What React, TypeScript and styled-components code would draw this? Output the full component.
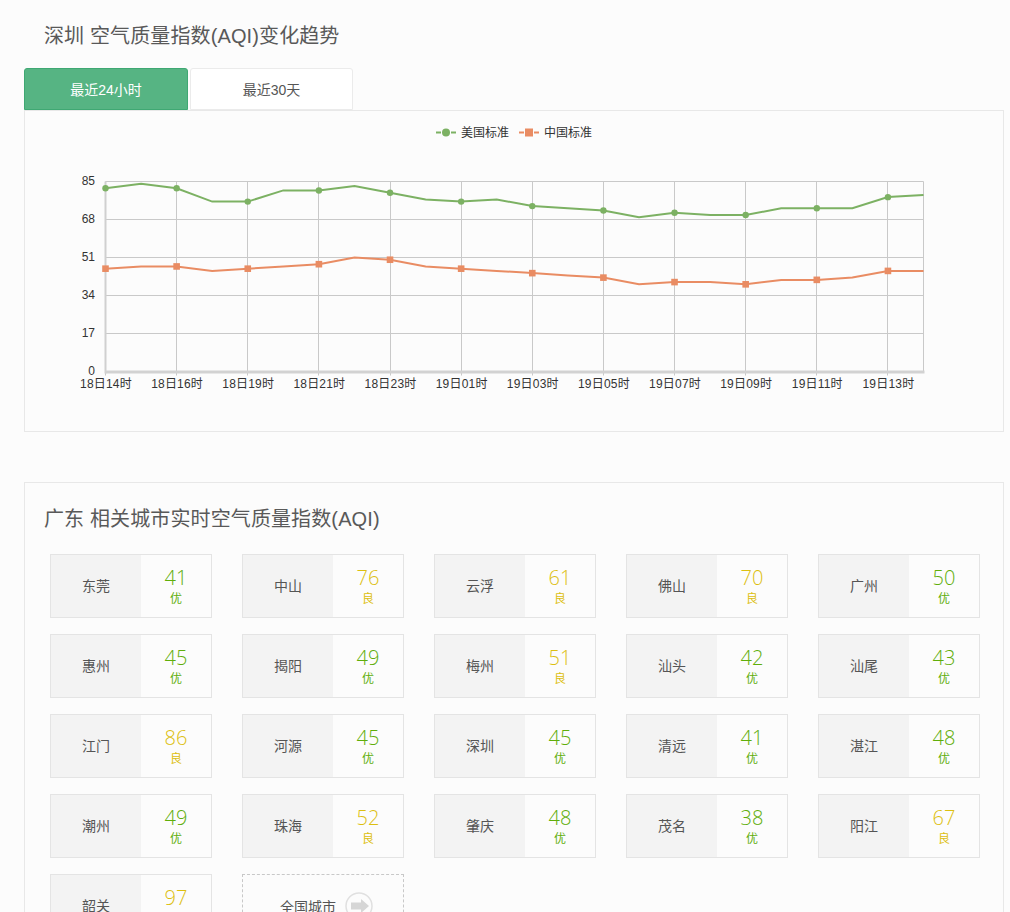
import React from "react";
import styled, { createGlobalStyle } from "styled-components";

const Global = createGlobalStyle`
  html, body { margin: 0; padding: 0; background: #fcfcfc; overflow: hidden; }
  body { font-family: "Liberation Sans", "Noto Sans CJK SC", sans-serif; color: #555; }
`;

const Page = styled.div`
  width: 1010px;
  box-sizing: border-box;
  padding: 0 6px 40px 24px;
`;
const Heading = styled.h2<{ $inset: number }>`
  margin: 0 0 0 ${(p) => p.$inset}px;
  padding-top: 23px;
  font-size: 20px;
  line-height: 26px;
  font-weight: 400;
  letter-spacing: 0.12px;
  color: #595959;
`;
const Tabs = styled.div`
  display: flex;
  gap: 2px;
  margin-top: 19px;
  height: 42px;
`;
const Tab = styled.div<{ $active?: boolean }>`
  width: ${(p) => (p.$active ? 164 : 163)}px;
  box-sizing: border-box;
  display: flex;
  align-items: center;
  justify-content: center;
  font-size: 14px;
  border-radius: 3px 3px 0 0;
  border: 1px solid ${(p) => (p.$active ? "#3fa873" : "#ebebeb")};
  background: ${(p) => (p.$active ? "#56b483" : "#fff")};
  color: ${(p) => (p.$active ? "#fff" : "#555")};
`;
const ChartPanel = styled.div`
  height: 322px;
  box-sizing: border-box;
  border: 1px solid #e8e8e8;
  background: #fcfcfc;
`;
const ChartSvg = styled.svg`
  display: block;
  font-family: "Liberation Sans", "Noto Sans CJK SC", sans-serif;
`;
const CityPanel = styled.div`
  margin-top: 50px;
  border: 1px solid #e8e8e8;
  padding: 0 0 40px 25px;
`;
const CityGrid = styled.div`
  display: grid;
  grid-template-columns: repeat(5, 162px);
  column-gap: 30px;
  row-gap: 16px;
  margin-top: 22px;
`;
const Cell = styled.div<{ $dashed?: boolean }>`
  height: 64px;
  box-sizing: border-box;
  display: flex;
  border: 1px ${(p) => (p.$dashed ? "dashed #c8c8c8" : "solid #e4e4e4")};
`;
const CityName = styled.div`
  width: 90px;
  flex: none;
  box-sizing: border-box;
  padding-bottom: 2px;
  background: #f3f3f3;
  display: flex;
  align-items: center;
  justify-content: center;
  font-size: 14px;
  color: #555;
`;
const Score = styled.div<{ $good: boolean }>`
  flex: 1;
  display: flex;
  flex-direction: column;
  align-items: center;
  padding-top: 11px;
  color: ${(p) => (p.$good ? "#5fae0a" : "#dcbf10")};
`;
const Value = styled.div`
  font-family: "Open Sans", "Liberation Sans", sans-serif;
  font-weight: 300;
  font-size: 20px;
  line-height: 24px;
`;
const Level = styled.div`
  margin-top: 1px;
  font-size: 12px;
  line-height: 16px;
`;
const AllCities = styled.div`
  flex: 1;
  display: flex;
  align-items: center;
  justify-content: center;
  gap: 9px;
  padding-left: 7px;
  font-size: 14px;
  color: #555;
`;

const us = [82,84,82,76,76,81,81,83,80,77,76,77,74,73,72,69,71,70,70,73,73,73,78,79];
const cn = [46,47,47,45,46,47,48,51,50,47,46,45,44,43,42,39,40,40,39,41,41,42,45,45];
const xLabels = ["18日14时","18日16时","18日19时","18日21时","18日23时","19日01时","19日03时","19日05时","19日07时","19日09时","19日11时","19日13时"];
const X0 = 80.5;
const STEP = 35.565;
const Y0 = 260.5;
const px = (i: number) => X0 + i * STEP;
const py = (v: number) => Y0 - (v * 190) / 85;
const snap = (x: number) => Math.floor(x) + 0.5;
const pts = (d: number[]) => d.map((v, i) => `${px(i).toFixed(1)},${py(v).toFixed(1)}`).join(" ");

const GREEN = "#7cb163";
const ORANGE = "#e98c63";
const GRID = "#c9c9c9";

function Chart() {
  return (
    <ChartSvg width="978" height="320" viewBox="0 0 978 320">
      <g fontSize="12" fill="#333">
        <line x1="411" x2="431" y1="21.5" y2="21.5" stroke={GREEN} strokeWidth="2" strokeDasharray="5 10 5" />
        <circle cx="421" cy="21.5" r="4" fill={GREEN} />
        <text x="436" y="25.500">美国标准</text>
        <line x1="494" x2="514" y1="21.5" y2="21.5" stroke={ORANGE} strokeWidth="2" strokeDasharray="5 10 5" />
        <rect x="500" y="17.5" width="8" height="8" fill={ORANGE} />
        <text x="519" y="25.500">中国标准</text>
      </g>
      {[85, 68, 51, 34, 17].map((v) => (
        <line key={v} x1={X0} x2={X0 + 818} y1={py(v)} y2={py(v)} stroke={GRID} />
      ))}
      {xLabels.map((_, i) => (
        <line key={i} x1={snap(px(i * 2))} x2={snap(px(i * 2))} y1={py(85)} y2={Y0 + 4} stroke={GRID} />
      ))}
      <line x1={X0 + 818} x2={X0 + 818} y1={py(85)} y2={Y0} stroke={GRID} />
      <line x1={X0} x2={X0} y1={py(85)} y2={Y0 + 2} stroke="#d0d0d0" strokeWidth="2" />
      <line x1={X0} x2={X0 + 819} y1={Y0 + 0.5} y2={Y0 + 0.5} stroke="#d2d2d2" strokeWidth="3" />
      <g fontSize="12" fill="#333" textAnchor="end">
        {[85, 68, 51, 34, 17, 0].map((v) => (
          <text key={v} x="70" y={py(v) + 3}>{v}</text>
        ))}
      </g>
      <g fontSize="12" fill="#333" textAnchor="middle" letterSpacing="0.2">
        {xLabels.map((l, i) => (
          <text key={l} x={px(i * 2) + 0.5} y="277">{l}</text>
        ))}
      </g>
      <polyline points={pts(us)} fill="none" stroke={GREEN} strokeWidth="2" />
      <polyline points={pts(cn)} fill="none" stroke={ORANGE} strokeWidth="2" />
      {us.map((v, i) => i % 2 === 0 && <circle key={i} cx={px(i)} cy={py(v)} r="3.2" fill={GREEN} />)}
      {cn.map((v, i) => i % 2 === 0 && <rect key={i} x={px(i) - 3.3} y={py(v) - 3.3} width="6.6" height="6.6" fill={ORANGE} />)}
    </ChartSvg>
  );
}

const cities: [string, number][] = [
  ["东莞",41],["中山",76],["云浮",61],["佛山",70],["广州",50],
  ["惠州",45],["揭阳",49],["梅州",51],["汕头",42],["汕尾",43],
  ["江门",86],["河源",45],["深圳",45],["清远",41],["湛江",48],
  ["潮州",49],["珠海",52],["肇庆",48],["茂名",38],["阳江",67],
  ["韶关",97],
];

export default function App() {
  return (
    <Page>
      <Global />
      <Heading $inset={20}>深圳 空气质量指数(AQI)变化趋势</Heading>
      <Tabs>
        <Tab $active>最近24小时</Tab>
        <Tab>最近30天</Tab>
      </Tabs>
      <ChartPanel>
        <Chart />
      </ChartPanel>
      <CityPanel>
        <Heading $inset={-6}>广东 相关城市实时空气质量指数(AQI)</Heading>
        <CityGrid>
          {cities.map(([name, v]) => (
            <Cell key={name}>
              <CityName>{name}</CityName>
              <Score $good={v <= 50}>
                <Value>{v}</Value>
                <Level>{v <= 50 ? "优" : "良"}</Level>
              </Score>
            </Cell>
          ))}
          <Cell $dashed>
            <AllCities>
              全国城市
              <svg width="28" height="28" viewBox="0 0 28 28">
                <circle cx="14" cy="14" r="13" fill="#fcfcfc" stroke="#e0e0e0" strokeWidth="1.5" />
                <path d="M6 10.500h10V7l8 7-8 7v-3.500H6z" fill="#d6d6d6" />
              </svg>
            </AllCities>
          </Cell>
        </CityGrid>
      </CityPanel>
    </Page>
  );
}
